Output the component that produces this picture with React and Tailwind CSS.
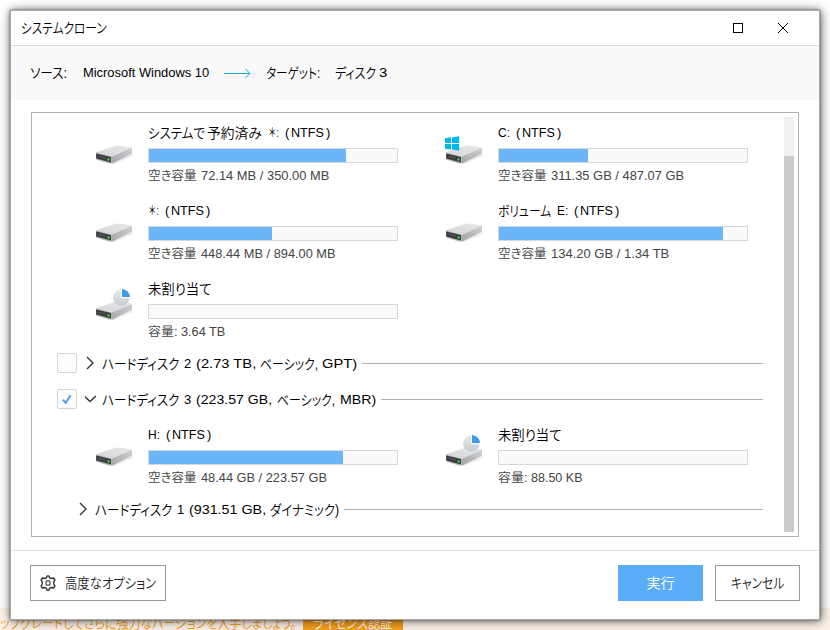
import { useLayoutEffect, useRef, useState } from 'react'

// Condenses a run of text so that it fills the width of its box
function Fit({ className, children }) {
  const box = useRef(null)
  const text = useRef(null)
  const [scale, setScale] = useState(1)

  useLayoutEffect(() => {
    setScale(box.current.clientWidth / text.current.offsetWidth)
  }, [children])

  return (
    <span ref={box} className={`block shrink-0 ${className}`}>
      <span ref={text} className="inline-block whitespace-nowrap origin-left" style={{ transform: `scaleX(${scale})` }}>
        {children}
      </span>
    </span>
  )
}

function Jp({ size = 'text-[14px]', className, children }) {
  return <Fit className={`font-[350] [font-feature-settings:'palt'] ${size} ${className}`}>{children}</Fit>
}

function DriveIcon({ badge }) {
  return (
    <svg width="40" height="34" viewBox="0 0 40 34" className="block">
      <defs>
        <linearGradient id="top" x1="0" y1="1" x2="1" y2="0">
          <stop offset="0" stopColor="#d6d7d9" />
          <stop offset="1" stopColor="#e6e6e8" />
        </linearGradient>
        <linearGradient id="side" x1="0" y1="1" x2="1" y2="0">
          <stop offset="0" stopColor="#a3a5a8" />
          <stop offset="1" stopColor="#d0d1d3" />
        </linearGradient>
        <linearGradient id="pie" x1="0" y1="0" x2="0" y2="1">
          <stop offset="0" stopColor="#e9ecee" />
          <stop offset="1" stopColor="#c5ccd0" />
        </linearGradient>
      </defs>
      <path d="M16 33 L37 23 L38.5 25 L19 33Z" fill="#000" opacity=".07" />
      <path d="M1 21.3 L20.5 14.8 Q22 14.4 24 14.7 L36 16.2 Q37 16.4 36.6 17 L17 25.4Z" fill="url(#top)" />
      <path d="M17 25.4 L37 16.8 V22.8 L18.5 32 L17 32.6Z" fill="url(#side)" />
      <path d="M1 21.3 L17 25.4 V32.6 L14 32.6 L1 28.4Z" fill="#b4b6b8" />
      <path d="M1.2 22.4 L16 26 V31.5 L1.2 27.6Z" fill="#3a3c3e" />
      <path d="M3.5 25.2 L10.5 27.2" stroke="#5c5f61" strokeWidth="1" />
      <rect x="12.4" y="27.4" width="2.4" height="2.2" fill="#2fd23a" />
      {badge === 'windows' && (
        <path
          d="M0 7.2 L6 6.3 V11.9 H0Z M7 6.2 L14.2 5.2 V11.9 H7Z M0 12.9 H6 V18.5 L0 17.8Z M7 12.9 H14.2 V19.5 L7 18.6Z"
          fill="#00b9f2"
        />
      )}
      {badge === 'pie' && (
        <>
          <circle cx="26.3" cy="10.5" r="8.3" fill="url(#pie)" />
          <path d="M26 1.5 H35.5 V11.2 H26Z" fill="#fff" />
          <path d="M27 2 A8.3 8.3 0 0 1 35.1 10.1 H27Z" fill="#3d9be9" />
        </>
      )}
    </svg>
  )
}

function Volume({ badge, fill, title, info }) {
  return (
    <div className="flex w-[350px] h-[78px]">
      <div className="w-[53px] pt-[10px]">
        <DriveIcon badge={badge} />
      </div>
      <div>
        <div className="flex items-center h-6 text-black">{title}</div>
        <div className="mt-[3px] w-[250px] h-[15px] border border-[#d1d8e0] bg-[#fafafa]">
          <div className={`h-full bg-[#6cb6f7] ${fill}`} />
        </div>
        <div className="mt-px flex items-center h-6 text-[#444]">{info}</div>
      </div>
    </div>
  )
}

function Ntfs() {
  return (
    <>
      <Fit className="ml-[6px] w-[4px]">(</Fit>
      <Fit className="ml-[2px] w-[33px]">NTFS</Fit>
      <Fit className="ml-[2px] w-[4px]">)</Fit>
    </>
  )
}

function Free({ children }) {
  return (
    <>
      <Jp size="text-[12.5px]" className="w-[48px]">空き容量</Jp>
      {children}
    </>
  )
}

function Unallocated() {
  return <Jp className="w-[64px]">未割り当て</Jp>
}

function Checkbox({ checked }) {
  return (
    <div className="mr-[8px] size-5 shrink-0 rounded-[2px] border border-[#d3d5d9] bg-[#fdfdfd]">
      {checked && (
        <svg width="18" height="18" viewBox="0 0 18 18" fill="none" stroke="#42a0f5" strokeWidth="2">
          <path d="M4.8 9.8 L7.8 12.7 L12.6 5.2" />
        </svg>
      )}
    </div>
  )
}

function Chevron({ open }) {
  return (
    <svg width="14" height="16" viewBox="0 0 14 16" fill="none" stroke="#333" strokeWidth="1.4" className="shrink-0">
      <path d={open ? 'M-0.8 5 L5 10.5 L10.8 5' : 'M2 2 L8 8 L2 14'} overflow="visible" />
    </svg>
  )
}

function DiskRow({ className, number, label, children }) {
  return (
    <div className={`flex items-center h-9 text-black ${className}`}>
      {children}
      <div className="flex items-center pt-[2px]">
        <Jp className="ml-[3px] w-[77px]">ハードディスク</Jp>
        <Fit className="ml-[5px] w-[7px]">{number}</Fit>
        {label}
      </div>
      <div className="ml-[5px] flex-1 h-px bg-[#b2b2b2]" />
    </div>
  )
}

export default function App() {
  return (
    <div className="relative flex flex-col justify-end w-[830px] h-[630px] overflow-hidden bg-white font-['Liberation_Sans','Noto_Sans_CJK_JP',sans-serif] text-[13px]">
      {/* upgrade strip behind the window */}
      <div className="flex items-start h-[22px] bg-[#fef3ea] text-[#f5a021]">
        <div className="flex pt-[3px]">
          <Jp className="w-[296px] leading-6">ップグレードしてさらに強力なバージョンを入手しましょう。</Jp>
        </div>
        <div className="ml-[7px] flex justify-center w-[100px] h-[22px] pt-[3px] bg-[#f7a01f] text-white">
          <Jp className="w-[80px] leading-6">ライセンス認証</Jp>
        </div>
      </div>

      {/* window */}
      <div className="absolute left-[10px] top-[10px] flex flex-col w-[810px] h-[610px] border border-[#a8a8a8] bg-white shadow-[0_0_2px_rgba(0,0,0,0.4),0_0_6px_rgba(0,0,0,0.3),1px_1px_11px_rgba(0,0,0,0.5)]">
        <header className="flex items-center h-[35px] shrink-0 pl-[10px] pr-[31px] border-b border-[#dcdcdc] text-black">
          <Jp className="w-[86px]">システムクローン</Jp>
          <svg width="55" height="12" viewBox="0 0 55 12" fill="none" stroke="#000" className="ml-auto">
            <rect x="0.5" y="1.5" width="9" height="9" />
            <path d="M45 1 L55 11 M55 1 L45 11" />
          </svg>
        </header>

        <div className="flex items-center h-[54px] shrink-0 pl-[19px] bg-[#f9f9f9] text-black">
          <Jp className="w-[37px]">ソース:</Jp>
          <Fit className="ml-[16px] w-[126px]">Microsoft Windows 10</Fit>
          <svg width="27" height="11" viewBox="0 0 27 11" fill="none" stroke="#16aedb" className="ml-[15px]">
            <path d="M0 5.5 H26 M21.5 1 L26 5.5 L21.5 10" />
          </svg>
          <Jp className="ml-[15px] w-[54px]">ターゲット:</Jp>
          <Jp className="ml-[15px] w-[41px]">ディスク</Jp>
          <Fit className="ml-[3px] w-[8px]">3</Fit>
        </div>

        <div className="flex w-[768px] h-[425px] mt-[12px] ml-[20px] shrink-0 border border-[#b0b0b0]">
          <div className="w-[752px] pt-[8px] pr-[21px]">
            <div className="grid grid-cols-[350px_350px] h-[224px] pl-[63px]">
              <Volume
                fill="w-[197px]"
                title={
                  <>
                    <Jp className="w-[57px]">システムで</Jp>
                    <Jp className="ml-[2px] w-[55px]">予約済み</Jp>
                    <Fit className="ml-[6px] w-[11px]">＊:</Fit>
                    <Ntfs />
                  </>
                }
                info={<Free><Fit className="ml-[5px] w-[128px]">72.14 MB / 350.00 MB</Fit></Free>}
              />
              <Volume
                badge="windows"
                fill="w-[89px]"
                title={<><Fit className="w-[12px]">C:</Fit><Ntfs /></>}
                info={<Free><Fit className="ml-[5px] w-[133px]">311.35 GB / 487.07 GB</Fit></Free>}
              />
              <Volume
                fill="w-[123px]"
                title={<><Fit className="w-[11px]">＊:</Fit><Ntfs /></>}
                info={<Free><Fit className="ml-[5px] w-[135px]">448.44 MB / 894.00 MB</Fit></Free>}
              />
              <Volume
                fill="w-[224px]"
                title={
                  <>
                    <Jp className="w-[53px]">ボリューム</Jp>
                    <Fit className="ml-[6px] w-[11px]">E:</Fit>
                    <Ntfs />
                  </>
                }
                info={<Free><Fit className="ml-[5px] w-[118px]">134.20 GB / 1.34 TB</Fit></Free>}
              />
              <Volume
                badge="pie"
                fill="w-0"
                title={<Unallocated />}
                info={<><Jp size="text-[12.5px]" className="w-[29px]">容量:</Jp><Fit className="ml-[4px] w-[44px]">3.64 TB</Fit></>}
              />
            </div>

            <DiskRow
              className="pl-[25px]"
              number="2"
              label={
                <>
                  <Fit className="ml-[5px] w-[60px]">(2.73 TB,</Fit>
                  <Jp className="ml-[4px] w-[58px]">ベーシック,</Jp>
                  <Fit className="ml-[4px] w-[35px]">GPT)</Fit>
                </>
              }
            >
              <Checkbox />
              <Chevron />
            </DiskRow>
            <DiskRow
              className="pl-[25px]"
              number="3"
              label={
                <>
                  <Fit className="ml-[5px] w-[76px]">(223.57 GB,</Fit>
                  <Jp className="ml-[5px] w-[58px]">ベーシック,</Jp>
                  <Fit className="ml-[5px] w-[36px]">MBR)</Fit>
                </>
              }
            >
              <Checkbox checked />
              <Chevron open />
            </DiskRow>

            <div className="grid grid-cols-[350px_350px] h-[74px] pt-[6px] pl-[63px]">
              <Volume
                fill="w-[194px]"
                title={<><Fit className="w-[12px]">H:</Fit><Ntfs /></>}
                info={<Free><Fit className="ml-[5px] w-[126px]">48.44 GB / 223.57 GB</Fit></Free>}
              />
              <Volume
                badge="pie"
                fill="w-0"
                title={<Unallocated />}
                info={<><Jp size="text-[12.5px]" className="w-[29px]">容量:</Jp><Fit className="ml-[4px] w-[52px]">88.50 KB</Fit></>}
              />
            </div>

            <DiskRow
              className="pl-[46px]"
              number="1"
              label={
                <>
                  <Fit className="ml-[5px] w-[77px]">(931.51 GB,</Fit>
                  <Jp className="ml-[4px] w-[69px]">ダイナミック)</Jp>
                </>
              }
            >
              <Chevron />
            </DiskRow>
          </div>

          {/* scrollbar */}
          <div className="w-[10px] h-[415px] mt-[4px] pt-[39px] bg-[#f0f0f0]">
            <div className="h-full bg-[#cbcbcb]" />
          </div>
        </div>

        <footer className="flex items-center h-[69px] mt-[13px] pb-[4px] px-[19px] border-t border-[#dce3e9]">
          <button className="flex items-center w-[136px] h-9 pl-[9px] border border-[#999] bg-white text-[#222]">
            <svg width="16" height="16" viewBox="0 0 16 16" fill="none" stroke="#333" strokeWidth="1.4">
              <path
                d="M6.3 2.8 L7.2 0.9 H8.8 L9.7 2.8 L11.2 3.5 L13.6 3 L14.9 5 L13.7 7 V9 L14.9 11 L13.6 13 L11.2 12.5 L9.7 13.2 L8.8 15.1 H7.2 L6.3 13.2 L4.8 12.5 L2.4 13 L1.1 11 L2.3 9 V7 L1.1 5 L2.4 3 L4.8 3.5Z"
                strokeLinejoin="round"
              />
              <circle cx="8" cy="8" r="2.2" stroke="#666" />
            </svg>
            <Jp className="ml-[9px] w-[91px]">高度なオプション</Jp>
          </button>
          <button className="ml-auto flex items-center justify-center w-[85px] h-9 bg-[#5aaef8] text-white">
            <Jp className="w-[28px]">実行</Jp>
          </button>
          <button className="ml-[12px] flex items-center justify-center w-[85px] h-9 border border-[#999] bg-white text-[#222]">
            <Jp className="w-[53px]">キャンセル</Jp>
          </button>
        </footer>
      </div>
    </div>
  )
}
